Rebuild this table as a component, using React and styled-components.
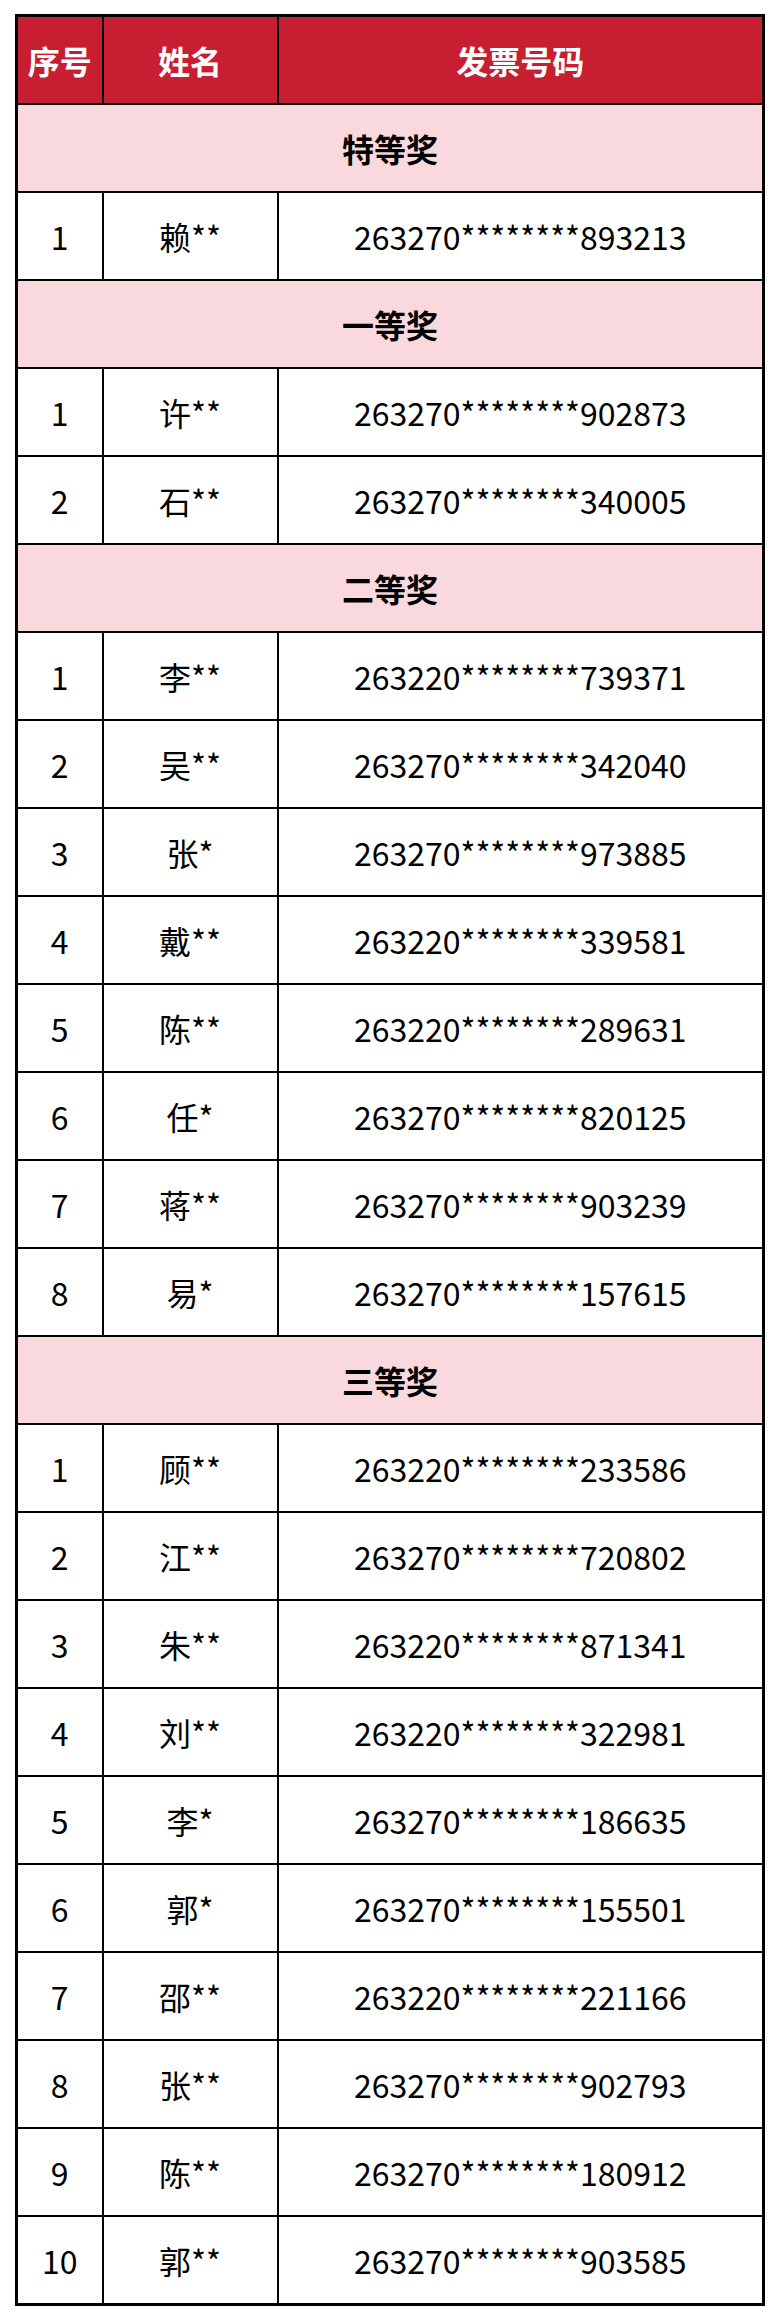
import styled, { createGlobalStyle } from "styled-components";

const GlobalStyle = createGlobalStyle`
  html, body {
    margin: 0;
    padding: 0;
    background: #ffffff;
  }
  body {
    font-family: "Noto Sans CJK SC", "Noto Sans", sans-serif;
  }
`;

const Page = styled.div`
  padding: 14px 15px 15px 15px;
`;

const Table = styled.table`
  width: 750px;
  border-collapse: collapse;
  border: 3px solid #000;
  table-layout: fixed;
  font-size: 32px;
  color: #000;
`;

const HeadCell = styled.th`
  height: 86px;
  padding: 0;
  background: #c81e32;
  color: #fff;
  font-weight: 700;
  border: 2px solid #000;
  text-align: center;
  vertical-align: middle;
`;

const SectionCell = styled.td`
  height: 86px;
  padding: 0;
  background: #fad9de;
  font-weight: 700;
  border: 2px solid #000;
  text-align: center;
  vertical-align: middle;
`;

const Cell = styled.td`
  height: 86px;
  padding: 0;
  background: #fff;
  font-weight: 400;
  border: 2px solid #000;
  text-align: center;
  vertical-align: middle;
  white-space: nowrap;
`;

const prizes = [
  {
    title: "特等奖",
    rows: [["赖**", "263270********893213"]],
  },
  {
    title: "一等奖",
    rows: [
      ["许**", "263270********902873"],
      ["石**", "263270********340005"],
    ],
  },
  {
    title: "二等奖",
    rows: [
      ["李**", "263220********739371"],
      ["吴**", "263270********342040"],
      ["张*", "263270********973885"],
      ["戴**", "263220********339581"],
      ["陈**", "263220********289631"],
      ["任*", "263270********820125"],
      ["蒋**", "263270********903239"],
      ["易*", "263270********157615"],
    ],
  },
  {
    title: "三等奖",
    rows: [
      ["顾**", "263220********233586"],
      ["江**", "263270********720802"],
      ["朱**", "263220********871341"],
      ["刘**", "263220********322981"],
      ["李*", "263270********186635"],
      ["郭*", "263270********155501"],
      ["邵**", "263220********221166"],
      ["张**", "263270********902793"],
      ["陈**", "263270********180912"],
      ["郭**", "263270********903585"],
    ],
  },
];

const App = () => {
  return (
    <Page>
      <GlobalStyle />
      <Table>
        <colgroup>
          <col style={{ width: 86 }} />
          <col style={{ width: 175 }} />
          <col />
        </colgroup>
        <thead>
          <tr>
            <HeadCell>序号</HeadCell>
            <HeadCell>姓名</HeadCell>
            <HeadCell>发票号码</HeadCell>
          </tr>
        </thead>
        <tbody>
          {prizes.map((prize) => [
            <tr key={prize.title}>
              <SectionCell colSpan={3}>{prize.title}</SectionCell>
            </tr>,
            ...prize.rows.map(([name, code], i) => (
              <tr key={prize.title + i}>
                <Cell>{i + 1}</Cell>
                <Cell>{name}</Cell>
                <Cell>{code}</Cell>
              </tr>
            )),
          ])}
        </tbody>
      </Table>
    </Page>
  );
};

export default App;
